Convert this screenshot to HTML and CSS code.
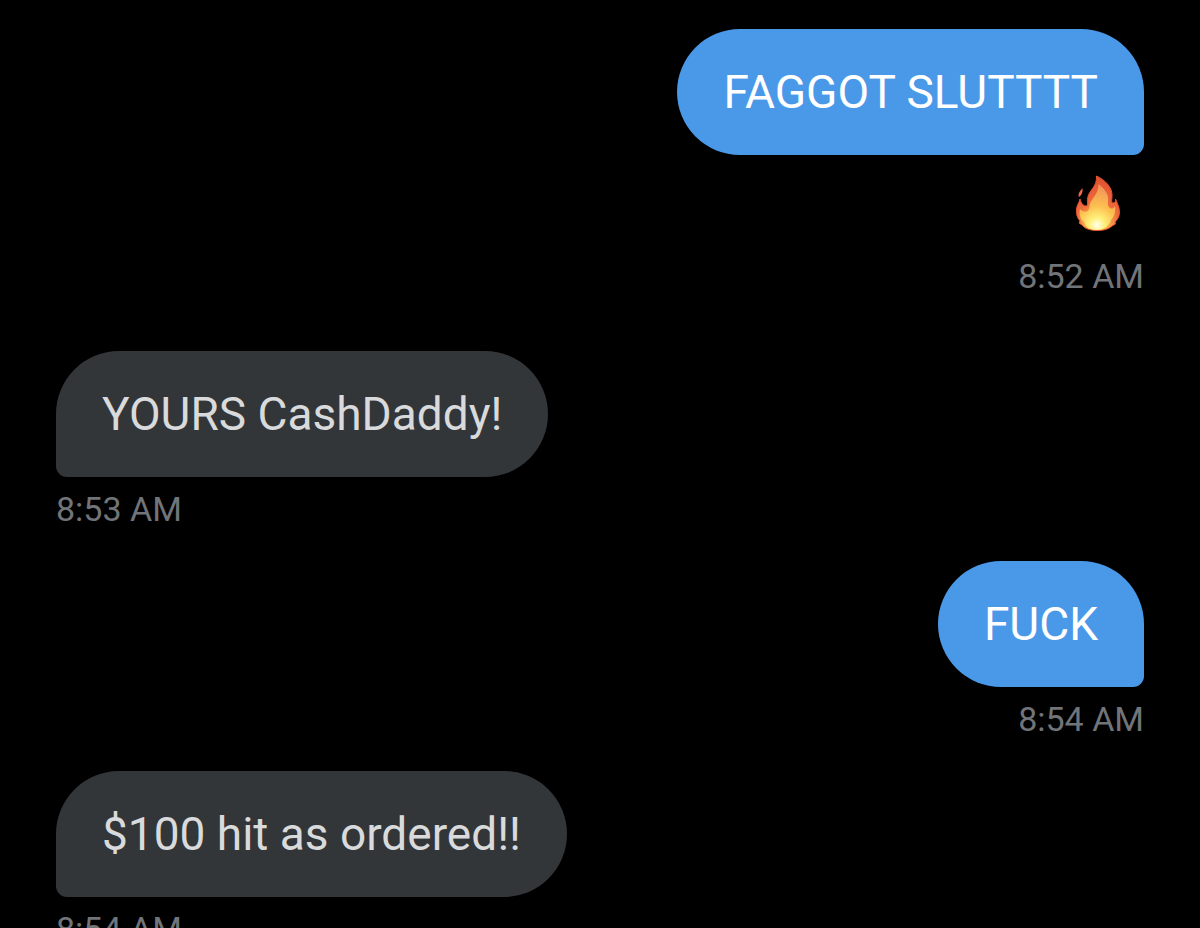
FILE: index.html
```
<!DOCTYPE html>
<html lang="en">
<head>
    <meta charset="UTF-8">
    <meta name="viewport" content="width=device-width, initial-scale=1.0">

    <title>Messages</title>
    <link rel="stylesheet" href="styles.css">
</head>
<body>
    <main class="chat">
        <div class="message sent has-reaction">
            <p class="bubble">FAGGOT SLUTTTT</p>
            <div class="reaction">
                <svg width="46" height="56" viewBox="0 0 46 56" role="img" aria-label="Fire">
                    <defs>
                        <radialGradient id="flame" gradientUnits="userSpaceOnUse" cx="22" cy="50" r="46">
                            <stop offset="0" stop-color="#ffe45c"/>
                            <stop offset="0.25" stop-color="#f9a94c"/>
                            <stop offset="0.5" stop-color="#ee6a3c"/>
                            <stop offset="1" stop-color="#e2522f"/>
                        </radialGradient>
                        <radialGradient id="core" gradientUnits="userSpaceOnUse" cx="22" cy="50" r="38">
                            <stop offset="0" stop-color="#fffff0"/>
                            <stop offset="0.2" stop-color="#fff07a"/>
                            <stop offset="0.5" stop-color="#fcc04f"/>
                            <stop offset="1" stop-color="#f3945a"/>
                        </radialGradient>
                    </defs>
                    <path fill="url(#flame)" stroke="#e8502f" stroke-width="1" d="M21.500 1C30 5 37 12 37 20C37 25 36 28 38 28C40 28 41 26 40.500 24C42 28 44.500 32 44.500 37C44.500 42 42 45 40 47L40.500 49L37 51C33 54.500 28 55.500 22.500 55.500C16 55.500 10 54 7 50L4 48L5 46C2 43 1 38 1.500 34C2 30 4 28 5 24C6 28 8 31 11 31C14 31 11 26 13.500 20C16 14 22 11 21.500 1Z"/>
                    <path fill="url(#core)" d="M23.500 9C31 15 34 20 33 27C32 33 37 36 40 31C41 37 39 42 36 45C35 50 29 55 22 55C15 55 10 52 9 47C5 44 4 39 5 34C8 38 14 38 14.500 32C14 25 24 20 23.500 9Z"/>
                    <path fill="#ef6a45" d="M7.500 13C8 17 7 20 4 22C2.500 19 5 16 7.500 13Z"/>
                </svg>
            </div>
            <time class="time">8:52 AM</time>
        </div>

        <div class="message received">
            <p class="bubble">YOURS CashDaddy!</p>
            <time class="time">8:53 AM</time>
        </div>

        <div class="message sent">
            <p class="bubble">FUCK</p>
            <time class="time">8:54 AM</time>
        </div>

        <div class="message received">
            <p class="bubble">$100 hit as ordered!!</p>
            <time class="time">8:54 AM</time>
        </div>
    </main>
</body>
</html>
```
FILE: styles.css
```
body {
    font-family: Roboto, Arial, sans-serif;
    background-color: #000;
    margin: 0;
    height: 100vh;
    overflow: hidden;
}
.chat {
    display: flex;
    flex-direction: column;
    gap: 29px;
    padding: 29px 56px;
}
.message {
    display: flex;
    flex-direction: column;
    align-items: flex-start;
    gap: 9px;
}
.sent {
    align-items: flex-end;
}
.has-reaction {
    margin-bottom: 23px;
}
.bubble {
    margin: 0;
    padding: 34px 46px;
    font-size: 46px;
    line-height: 58px;
    border-radius: 63px;
}
.sent .bubble {
    color: #fff;
    background-color: #4a99e9;
    border-bottom-right-radius: 11px;
}
.received .bubble {
    color: #d9dadb;
    background-color: #333639;
    border-bottom-left-radius: 11px;
}
.reaction {
    padding: 11px 23px 13px;
}
.reaction svg {
    display: block;
}
.time {
    font-size: 34px;
    line-height: 46px;
    color: #717478;
}
```
